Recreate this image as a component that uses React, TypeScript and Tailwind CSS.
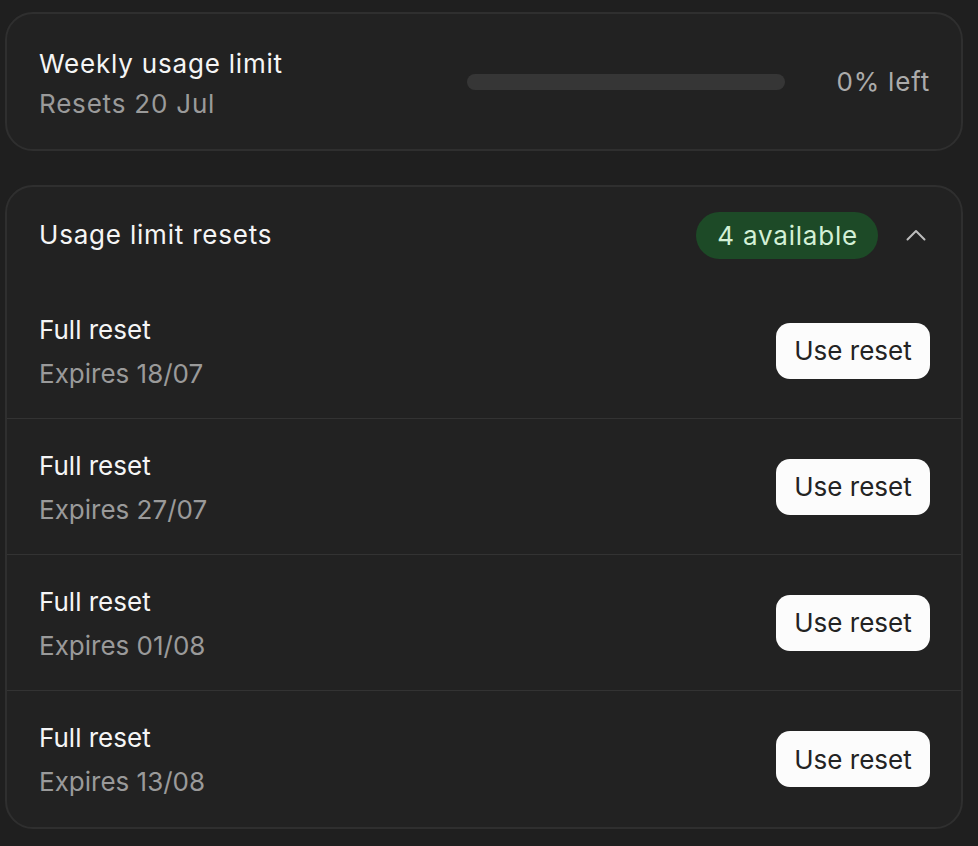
import { type JSX } from "react"

const resets = ["18/07", "27/07", "01/08", "13/08"]

const ResetRow = ({ date, last }: { date: string; last: boolean }): JSX.Element => {
  return (
    <div
      className={`flex h-[136px] items-center justify-between pl-[32px] pr-[31px] ${
        last ? "" : "border-b border-[#333333]"
      }`}
    >
      <div className="flex flex-col gap-[12px] pt-[2px]">
        <p className="text-[26px] leading-[32px] text-[#f5f5f5]">Full reset</p>
        <p className="text-[26px] leading-[32px] text-[#9a9a9a]">Expires {date}</p>
      </div>
      <button className="h-[56px] w-[154px] rounded-[14px] bg-[#fcfcfc] text-[26px] text-[#232323]">
        Use reset
      </button>
    </div>
  )
}

export default function App(): JSX.Element {
  return (
    <div
      className="min-h-[846px] w-[978px] bg-[#1f1f1f] pl-[5px] pr-[15px] pt-[12px]"
      style={{ fontFamily: "Inter, 'Noto Sans', sans-serif" }}
    >
      <div className="flex h-[139px] items-center justify-between rounded-[28px] border-2 border-[#2f2f2f] bg-[#222222] pl-[32px] pr-[31px] tracking-[0.8px]">
        <div className="flex flex-col gap-[8px] pt-[5px]">
          <p className="text-[26px] leading-[32px] text-[#f5f5f5]">Weekly usage limit</p>
          <p className="text-[26px] leading-[32px] text-[#9a9a9a]">Resets 20 Jul</p>
        </div>
        <div className="flex items-center gap-[51px]">
          <div className="h-[16px] w-[318px] rounded-full bg-[#363636]" />
          <p className="text-[26px] leading-[32px] text-[#ababab]">0% left</p>
        </div>
      </div>

      <div className="mt-[34px] rounded-[28px] border-2 border-[#2f2f2f] bg-[#222222]">
        <div className="flex h-[96px] items-center justify-between pl-[32px] pr-[35px] tracking-[0.8px]">
          <p className="text-[26px] leading-[32px] text-[#f5f5f5]">Usage limit resets</p>
          <div className="flex items-center gap-[28px]">
            <span className="flex h-[47px] items-center rounded-full bg-[#1d4a27] pl-[21px] pr-[20px] text-[26px] text-[#d3f0d6]">
              4 available
            </span>
            <svg width="20" height="12" viewBox="0 0 20 12" fill="none">
              <polyline
                points="1.5,10.5 10,2 18.5,10.5"
                stroke="#bdbdbd"
                strokeWidth="2"
                strokeLinecap="round"
                strokeLinejoin="round"
              />
            </svg>
          </div>
        </div>
        {resets.map((d, i) => (
          <ResetRow key={d} date={d} last={i === resets.length - 1} />
        ))}
      </div>
    </div>
  )
}
